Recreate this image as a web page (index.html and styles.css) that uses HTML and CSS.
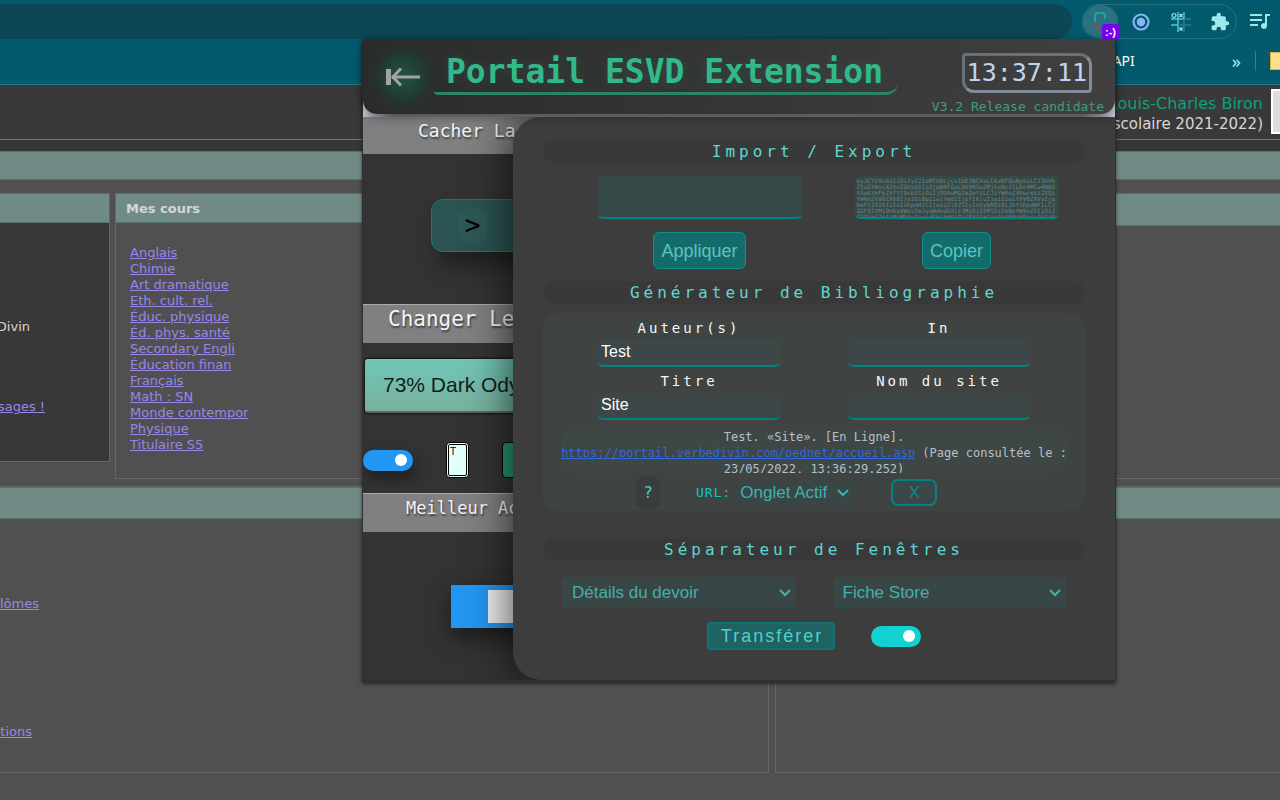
FILE: index.html
```html
<!DOCTYPE html>
<html lang="fr">
<head>
<meta charset="utf-8">
<title>Portail ESVD Extension</title>
<link rel="stylesheet" href="styles.css">
</head>
<body>
<div class="toolbar">
  <div class="address"></div>
  <div class="extensions">
    <button class="ext active" aria-label="Portail ESVD">
      <svg width="20" height="24" viewBox="0 0 20 24" fill="none" stroke-width="2"><path d="M4 12V6q0-3 3-3h4q3 0 3 3v3" stroke="#1fa3a0"/><path d="M4 14q0 4 4 5" stroke="#e02840" stroke-dasharray="3 2"/></svg>
      <span class="badge">:-)</span>
    </button>
    <button class="ext" aria-label="Cible"><svg width="20" height="20" viewBox="0 0 20 20"><circle cx="10" cy="10" r="7.5" fill="none" stroke="#8ab4f8" stroke-width="2.2"/><circle cx="10" cy="10" r="4.2" fill="#8ab4f8"/></svg></button>
    <button class="ext" aria-label="Morpion"><svg width="20" height="20" viewBox="0 0 20 20" fill="none" stroke="#9fe8ec" stroke-width="1.2"><path d="M7 0v7M13 0v7M7 7v13M0 7h13M0 13h7" stroke="#4cc6dc" stroke-width="1.5"/><path d="M13 7v13M13 7h7M7 13h13" stroke="#2c7a8e" stroke-width="1.5"/><circle cx="3" cy="3.5" r="2"/><path d="M8.5 2l3 3m0-3l-3 3M8.500 15.500l3 3m0-3l-3 3"/></svg></button>
    <button class="ext" aria-label="Extensions"><svg width="20" height="20" viewBox="0 0 24 24" fill="#9de8ea"><path d="M20.500 11H19V7a2 2 0 0 0-2-2h-4V3.500a2.500 2.500 0 0 0-5 0V5H4a2 2 0 0 0-2 2v3.800h1.500a2.700 2.700 0 0 1 0 5.400H2V20a2 2 0 0 0 2 2h3.800v-1.500a2.700 2.700 0 0 1 5.400 0V22H17a2 2 0 0 0 2-2v-4h1.500a2.500 2.500 0 0 0 0-5z"/></svg></button>
  </div>
  <button class="ext media" aria-label="Lecture"><svg width="20" height="18" viewBox="0 0 20 18" fill="#9de8ea"><path d="M0 1h12v2H0zM0 6h12v2H0zM0 11h8v2H0zM15 1h5v2h-3v10a3 3 0 1 1-2-2.800z"/></svg></button>
</div>
<nav class="bookmarks">
  <a href="#api">API</a><button class="more" aria-label="Plus de favoris">»</button><span class="divider"></span><span class="folder"></span>
</nav>

<header class="site-header">
  <div class="student"><p class="student-name">Louis-Charles Biron</p><p>(Année scolaire 2021-2022)</p></div>
  <div class="portrait"></div>
</header>
<main class="portal">
  <div class="band"></div>
  <div class="cards">
    <section class="card dark">
      <h2></h2>
      <div class="clip"><p>Divin</p><p><a href="#messages">sages !</a></p></div>
    </section>
    <section class="card">
      <h2>Mes cours</h2>
      <ul>
        <li><a href="#c">Anglais</a></li><li><a href="#c">Chimie</a></li><li><a href="#c">Art dramatique</a></li><li><a href="#c">Eth. cult. rel.</a></li><li><a href="#c">Éduc. physique</a></li><li><a href="#c">Éd. phys. santé</a></li><li><a href="#c">Secondary Engli</a></li><li><a href="#c">Éducation finan</a></li><li><a href="#c">Français</a></li><li><a href="#c">Math : SN</a></li><li><a href="#c">Monde contempor</a></li><li><a href="#c">Physique</a></li><li><a href="#c">Titulaire S5</a></li>
      </ul>
    </section>
    <section class="card tall"><h2></h2></section>
  </div>
  <div class="lower">
    <div class="band"></div>
    <div class="lower-grid">
      <div class="lower-links"><a href="#d">lômes</a><a href="#n">tions</a></div>
      <div class="lower-side"></div>
    </div>
  </div>
</main>

<div class="popup">
  <header class="popup-head">
    <button class="back" aria-label="Retour"><svg width="34" height="20" viewBox="0 0 34 20" fill="none" stroke="#a0a4a4"><path d="M2.500 2v16" stroke-width="5"/><path d="M6 10h28" stroke-width="3"/><path d="M15 1.500L7 10l8 8.500" stroke-width="3"/></svg></button>
    <h1>Portail ESVD Extension</h1>
    <div class="status"><time>13:37:11</time><small>V3.2 Release candidate</small></div>
  </header>
  <div class="popup-body">
    <div class="under">
      <h2 class="strip first">Cacher La</h2>
      <button class="reveal"><span>&gt;</span></button>
      <h2 class="strip second">Changer Le</h2>
      <button class="theme">73% Dark Ody</button>
      <div class="options">
        <input type="checkbox" class="switch blue" checked aria-label="Activer le thème">
        <button class="swatch">T</button>
        <button class="swatch green" aria-label="Couleur verte"></button>
      </div>
      <h2 class="strip third">Meilleur Ac</h2>
      <input type="checkbox" class="block-switch" checked aria-label="Meilleur accueil">
    </div>
    <div class="panel">
      <h2 class="title">Import / Export</h2>
      <div class="transfer">
        <div><textarea aria-label="Importer"></textarea><button class="action">Appliquer</button></div>
        <div><textarea class="code" aria-label="Exporter" readonly>ey3CY29sb3IiOiJyZ2IoMTU0LjcsIDE1NCAsLCAxNTQuNykiLCJ3RVk
Z5aGYWxsX2VsZGhvdXIiOjpbNTQuLDU5NSw2MjAsNzI1LDc4MCw4NDU
XSwGYmFkZVfY29sb3IiOiIjODAwMGZmZmYiLCJiYWRnZVRwcmVzZXQi
YWRnZV90ZXh0IjoiOi0pIiwiYmd2IjpfIkluIjoiIiwiYXV0ZXVyIjo
bmFtZSI6IiIsInRpdHJlIjoiU2l0ZSIsInVybHQiOiJhY3RpdWYiLCJ
ZGF0ZXMiOnRydWUsImJyaWdodG5lc3MiOiI5MSIsImNoYW5nZXIiOiJ
Z29lbCI6IiMwMDAwIiwidGhlbWUiOiJEYXJrIiwib3B0aW9ucyI6IjE</textarea><button class="action">Copier</button></div>
      </div>
      <h2 class="title">Générateur de Bibliographie</h2>
      <div class="biblio">
        <div class="fields">
          <label>Auteur(s)<input type="text" value="Test"></label>
          <label>In<input type="text"></label>
          <label>Titre<input type="text" value="Site"></label>
          <label>Nom du site<input type="text"></label>
        </div>
        <p class="citation">Test. «Site». [En Ligne].<br><a href="#accueil">https://portail.verbedivin.com/pednet/accueil.asp</a> (Page consultée le :<br>23/05/2022, 13:36:29.252)</p>
        <div class="source">
          <button class="help">?</button>
          <label class="url" for="url">URL:</label>
          <span class="pick small"><select id="url"><option>Onglet Actif</option></select><svg width="12" height="8" viewBox="0 0 12 8"><path d="M1 1l5 5 5-5"/></svg></span>
          <button class="clear">X</button>
        </div>
      </div>
      <h2 class="title last">Séparateur de Fenêtres</h2>
      <div class="windows">
        <span class="pick"><select aria-label="Première fenêtre"><option>Détails du devoir</option></select><svg width="12" height="8" viewBox="0 0 12 8"><path d="M1 1l5 5 5-5"/></svg></span>
        <span class="pick"><select aria-label="Seconde fenêtre"><option>Fiche Store</option></select><svg width="12" height="8" viewBox="0 0 12 8"><path d="M1 1l5 5 5-5"/></svg></span>
      </div>
      <div class="send"><button class="transfer-btn">Transférer</button><input type="checkbox" class="switch" checked aria-label="Séparer"></div>
    </div>
  </div>
</div>
</body>
</html>
```

FILE: styles.css
```css
* { box-sizing: border-box; }
body, h1, h2, p, ul { margin: 0; padding: 0; }
button, input, textarea, select { margin: 0; font: inherit; }
button { padding: 0; border: 0; background: none; color: inherit; }
ul { list-style: none; }

body {
  position: relative;
  height: 100vh;
  overflow: hidden;
  display: flex;
  flex-direction: column;
  background: #505050;
  color: #d6d6d6;
  font: 13px/16px "DejaVu Sans", sans-serif;
}
a { color: #9a86e8; }

/* Browser bars */
.toolbar {
  flex: none;
  display: flex;
  align-items: center;
  gap: 10px;
  padding: 4px 7px 0 0;
  background: #045a6d;
}
.address {
  flex: 1;
  height: 35px;
  border-radius: 0 18px 18px 0;
  background: #0d4655;
}
.extensions {
  display: flex;
  gap: 5px;
  height: 35px;
  border: 1px solid #2a7183;
  border-radius: 18px;
}
.ext {
  position: relative;
  display: grid;
  place-items: center;
  width: 35px;
}
.extensions .ext { height: 33px; }
.extensions .ext:last-child { width: 33px; }
.active { border-radius: 50%; background: #2b7182; }
.media { width: 26px; }
.badge {
  position: absolute;
  right: -1px;
  bottom: -2px;
  padding: 0 3px;
  border-radius: 3px;
  background: #7c00f5;
  color: #fff;
  font: bold 11px/16px "Liberation Sans", sans-serif;
}
.bookmarks {
  flex: none;
  display: flex;
  align-items: center;
  justify-content: flex-end;
  height: 46px;
  padding-bottom: 2px;
  border-bottom: 1px solid #237b8c;
  background: #045a6d;
}
.bookmarks a {
  margin-right: 97px;
  color: #fff;
  font: 14px/18px "Noto Sans", sans-serif;
  text-decoration: none;
}
.more { color: #b5eef2; font: 18px/18px "Noto Sans", sans-serif; }
.divider { width: 1px; height: 20px; margin: 0 14px; background: #2e8291; }
.folder { width: 10px; height: 18px; border: 1px solid #d8b64c; border-right: 0; background: #ffe08a; }

/* School portal */
.site-header {
  flex: none;
  display: flex;
  justify-content: flex-end;
  gap: 8px;
  height: 55px;
  padding-top: 4px;
  border-bottom: 1px solid #757575;
  background: #393939;
}
.student {
  padding-top: 4px;
  font-size: 15px;
  line-height: 21px;
  text-align: right;
}
.student-name { color: #0ba07c; font-size: 16px; }
.portrait { width: 9px; height: 45px; border: 2px solid #fff; border-right: 0; background: #ddd; }
.portal { flex: 1; padding-top: 11px; background: linear-gradient(#373737 11px, #505050 11px); }
.band { height: 29px; border: 1px solid #59716b; border-width: 1px 0; background: #708b85; }
.cards {
  display: grid;
  grid-template-columns: 110px 1fr 1fr;
  gap: 5px;
  align-items: start;
  padding-top: 13px;
}
.card { height: 286px; border: 1px solid #666; }
.card h2 {
  height: 29px;
  padding-left: 10px;
  border-bottom: 1px solid #59716b;
  background: #708b85;
  font-size: 13px;
  line-height: 29px;
}
.card.tall { border-right: 0; }
.card.tall h2 { height: 32px; }
.card ul { padding: 22px 14px; }
.dark { height: 269px; border-left: 0; background: #383838; }
.clip {
  display: flex;
  flex-direction: column;
  align-items: flex-end;
  gap: 64px;
  width: 45px;
  padding-top: 96px;
  white-space: nowrap;
}
.clip p:first-child { padding-right: 15px; }
.lower { margin-top: 7px; border-top: 1px solid #666; }
.lower .band { height: 32px; }
.lower-grid { display: grid; grid-template-columns: 6fr 4fr; gap: 6px; height: 254px; margin-right: -7px; }
.lower-links, .lower-side { border: 1px solid #666; border-top: 0; }
.lower-links {
  display: flex;
  flex-direction: column;
  align-items: flex-end;
  gap: 112px;
  padding: 77px calc(100% - 40px) 0 0;
  border-left: 0;
  white-space: nowrap;
}
.lower-links a:last-child { padding-right: 7px; }

/* Extension popup */
.popup {
  position: absolute;
  top: 39px;
  right: 164px;
  display: flex;
  flex-direction: column;
  width: 754px;
  border: 1px solid #303034;
  border-width: 0 1px 2px;
  background: linear-gradient(90deg, #c6ccd8, #70767a 30px, #70767a 720px, #c6ccd8) top / 100% 78px no-repeat #333;
  box-shadow: 0 2px 4px #0008;
  font-family: "DejaVu Sans Mono", monospace;
}
.popup-head {
  z-index: 2;
  display: flex;
  align-items: flex-start;
  height: 75px;
  padding: 11px 11px 0 14px;
  border-radius: 0 0 14px 14px;
  background: linear-gradient(100deg, #2b2b2b, #404040);
  box-shadow: 0 3px 12px #0005;
}
.back {
  display: grid;
  place-items: center;
  width: 52px;
  height: 53px;
  border-radius: 50%;
  background: radial-gradient(#215342, #22362f 70%);
  box-shadow: 0 0 20px #2448;
}
h1 {
  height: 45px;
  margin-left: 5px;
  padding: 0 15px 0 12px;
  border-bottom: 3px solid #2a8466;
  border-radius: 4px 4px 12px 4px;
  color: #32b98a;
  font-size: 33px;
  line-height: 44px;
  text-shadow: 0 0 14px #32b98a33;
  white-space: nowrap;
}
.status {
  display: flex;
  flex: 1;
  flex-direction: column;
  align-items: flex-end;
  gap: 7px;
  padding-top: 3px;
}
.status time {
  margin-right: 12px;
  padding: 0 2px;
  border: 3px solid #7f8c99;
  border-top-color: #65717b;
  border-left-color: #65717b;
  border-radius: 4px 12px;
  color: #bfd5ef;
  font-size: 25px;
  line-height: 34px;
}
.status small { color: #439c7c; font-size: 13px; line-height: 14px; white-space: nowrap; }
.popup-body {
  display: grid;
  grid-template-columns: 150px minmax(0, 1fr);
  margin-top: 3px;
  overflow: clip;
}
.under { margin-right: -30px; overflow: hidden; background: #333; }
.strip {
  height: 39px;
  border-top: 1px solid #aaa;
  background: #808080;
  color: #f0f5fa;
  font-weight: 400;
  line-height: 28px;
  text-shadow: 1px 2px 2px #0008;
  white-space: nowrap;
}
.first { height: 37px; padding-left: 55px; border-top: 0; font-size: 18px; }
.second { padding-left: 25px; font-size: 21px; }
.third { padding-left: 43px; font-size: 17px; }
.reveal {
  display: block;
  width: 200px;
  height: 53px;
  margin: 45px 0 52px 68px;
  padding-left: 26px;
  border: 1px solid #0b7f7d;
  border-radius: 12px;
  background: #2a5351;
  box-shadow: 8px 14px 20px #0006;
  color: #000;
  text-align: left;
}
.reveal span {
  display: inline-block;
  width: 29px;
  border-radius: 10px;
  background: #2c5856;
  font-size: 26px;
  line-height: 33px;
  text-align: center;
}
.theme {
  display: block;
  width: 240px;
  height: 54px;
  margin: 16px 0 0 2px;
  padding-left: 18px;
  border-bottom: 2px solid #666;
  border-radius: 3px;
  background: linear-gradient(#70c6b8, #79b09d);
  box-shadow: 0 0 2px 1px #111;
  color: #151c1c;
  font: 21px/24px "Liberation Sans", sans-serif;
  text-align: left;
}
.options { display: flex; align-items: center; gap: 33px; height: 80px; padding-top: 14px; }
.switch {
  flex: none;
  display: flex;
  align-items: center;
  justify-content: flex-end;
  width: 50px;
  height: 21px;
  padding-right: 6px;
  border-radius: 11px;
  background: #12d1d1;
  appearance: none;
}
.switch::before { content: ""; width: 12px; height: 12px; border-radius: 50%; background: #fff; }
.blue { background: #2196f3; box-shadow: 3px 8px 14px #0006; }
.swatch {
  flex: none;
  width: 23px;
  height: 36px;
  padding: 1px;
  border: 3px double #000;
  border-radius: 4px;
  background: #e3fffb;
  color: #222;
  font-size: 10px;
  line-height: 12px;
  display: flex;
}
.green { width: 40px; border: 1px solid #000; background: #28986f; }
.block-switch {
  display: flex;
  align-items: center;
  width: 160px;
  height: 43px;
  margin: 53px 0 0 88px;
  padding-left: 37px;
  background: #2196f3;
  box-shadow: 0 8px 22px #0008;
  appearance: none;
}
.block-switch::before { content: ""; width: 70px; height: 33px; background: #eee; }

.panel {
  z-index: 1;
  padding: 23px 30px 30px;
  border-radius: 28px 0 0 28px;
  background: #3d3d3d;
  box-shadow: 0 0 45px #000b;
}
.title {
  border-radius: 12px;
  background: #393939;
  color: #5fd6d3;
  font-size: 16px;
  font-weight: 400;
  letter-spacing: 4px;
  line-height: 23px;
  text-align: center;
}
.transfer { display: grid; grid-template-columns: 1fr 1fr; padding: 13px 0 12px 28px; }
.transfer > div { display: flex; flex-direction: column; align-items: center; gap: 13px; }
.transfer textarea {
  width: 204px;
  height: 43px;
  padding: 2px;
  border: 0;
  border-bottom: 2px solid #008482;
  border-radius: 5px;
  background: #354947;
  color: #6f8585;
  font-size: 6px;
  line-height: 6px;
  overflow: hidden;
  resize: none;
}
.transfer .code { white-space: pre; }
.action {
  height: 37px;
  padding: 0 7px;
  border: 1px solid #118f8d;
  border-radius: 6px;
  background: #146c6a;
  color: #5cc4c1;
  font: 18px/20px "Liberation Sans", sans-serif;
}
.biblio { margin-top: 9px; padding: 5px 18px 1px; border-radius: 14px; background: #3f4443; }
.fields { display: grid; grid-template-columns: 1fr 1fr; margin: 0 3px; }
.fields label {
  display: flex;
  flex-direction: column;
  align-items: center;
  gap: 2px;
  height: 53px;
  color: #f4f8f8;
  font-size: 14px;
  letter-spacing: 3px;
  line-height: 20px;
}
.fields input {
  width: 182px;
  height: 27px;
  padding: 0 3px 2px;
  border: 0;
  border-bottom: 2px solid #008482;
  border-radius: 5px;
  background: #3d4747;
  color: #fff;
  font: 16px/20px "Liberation Sans", sans-serif;
}
.citation {
  height: 44px;
  margin-top: 5px;
  overflow: hidden;
  border-radius: 12px;
  background: #3e4646;
  color: #b9c0c8;
  font-size: 12px;
  line-height: 16px;
  text-align: center;
  white-space: nowrap;
}
.citation a { color: #3268d8; }
.source { display: flex; align-items: center; padding: 2px 0 0 75px; }
.help {
  width: 24px;
  height: 35px;
  border-radius: 10px;
  background: #3a3d3d;
  color: #4fd0cd;
  font-size: 16px;
}
.url { margin: 0 3px 0 36px; color: #12c5c5; font-size: 13px; letter-spacing: 1px; }
.pick {
  display: grid;
  align-items: center;
  height: 32px;
  border-radius: 4px;
  background: #384746;
  color: #42b0ae;
}
.pick select, .pick svg { grid-area: 1 / 1; }
.pick select {
  width: 100%;
  padding: 0 26px 0 10px;
  border: 0;
  background: none;
  color: inherit;
  font: 17px/22px "Liberation Sans", sans-serif;
  appearance: none;
}
.pick svg {
  justify-self: end;
  margin-right: 5px;
  fill: none;
  stroke: #42b0ae;
  stroke-width: 2;
  pointer-events: none;
}
.small { height: 24px; }
.small select { padding-left: 6px; }
.clear {
  width: 46px;
  height: 27px;
  margin-left: 37px;
  border: 2px solid #008482;
  border-radius: 7px;
  background: #3b4847;
  color: #0b8a88;
  font: 17px/20px "Liberation Sans", sans-serif;
}
.last { margin-top: 27px; }
.windows { display: grid; grid-template-columns: 1fr 1fr; gap: 37px; padding: 16px 19px 13px; }
.send { display: flex; align-items: center; justify-content: center; gap: 36px; }
.transfer-btn {
  height: 28px;
  padding: 0 10px 0 12px;
  border: 2px solid #0f7371;
  border-radius: 3px;
  background: #1e6261;
  color: #55cfcc;
  font: 18px/20px "Liberation Sans", sans-serif;
  letter-spacing: 2px;
}
```
